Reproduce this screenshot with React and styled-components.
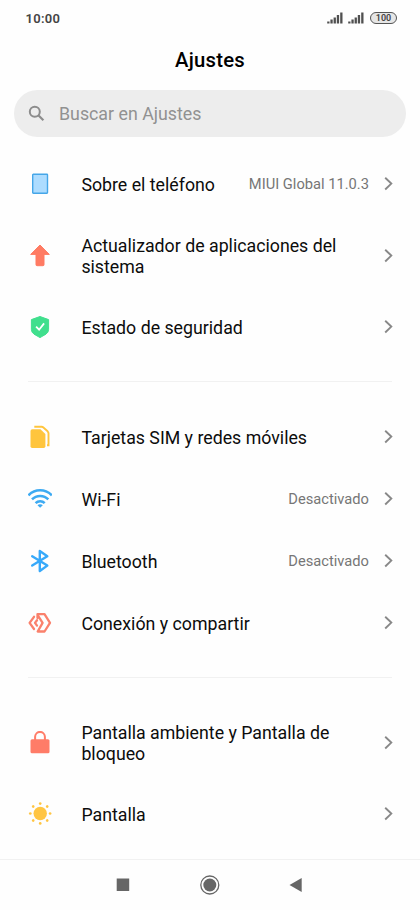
import React from "react";
import styled, { createGlobalStyle } from "styled-components";

const GlobalStyle = createGlobalStyle`
    * {
        box-sizing: border-box;
    }

    body {
        margin: 0;
        background: #fefefe;
        font-family: Roboto, "Liberation Sans", sans-serif;
    }
`;

const Screen = styled.div`
    display: flex;
    flex-direction: column;
    width: 420px;
    height: 910px;
    overflow: hidden;
    background: #fefefe;
`;

const StatusBar = styled.header`
    display: flex;
    align-items: center;
    justify-content: space-between;
    height: 36px;
    padding: 0 23px 0 25.5px;
`;

const Clock = styled.span`
    font-size: 13px;
    font-weight: 600;
    letter-spacing: 0.3px;
    color: #444;
`;

const StatusIcons = styled.div`
    display: flex;
    align-items: center;
    gap: 5px;
`;

const Battery = styled.span`
    width: 27px;
    height: 12px;
    margin-left: 1px;
    border: 1.5px solid #555;
    border-radius: 6px;
    background: #e6e6e6;
    font-size: 9px;
    font-weight: 600;
    line-height: 10px;
    text-align: center;
    color: #444;
`;

const Title = styled.h1`
    height: 54px;
    margin: 0;
    font-size: 20.3px;
    font-weight: 500;
    line-height: 48px;
    letter-spacing: 0.25px;
    text-align: center;
    color: #000;
`;

const SearchBox = styled.div`
    display: flex;
    flex-shrink: 0;
    align-items: center;
    gap: 14px;
    height: 47px;
    margin: 0 14px 16px;
    padding: 0 14px;
    border-radius: 24px;
    background: #ededed;
    font-size: 17.8px;
    color: #919191;
`;

const Divider = styled.hr`
    flex-shrink: 0;
    height: 1px;
    margin: 23px 28px 24px;
    border: 0;
    background: #f1f1f1;
`;

const Row = styled.div`
    display: flex;
    align-items: center;
    height: ${props => (props.$tall ? 81 : 62)}px;
    padding: 0 26px 0 28px;
`;

const Icon = styled.svg`
    display: block;
    flex-shrink: 0;
    width: ${props => props.$width || 24}px;
    height: ${props => props.$height || 24}px;
`;

const Label = styled.span`
    flex: 1;
    margin-left: 29.4px;
    padding-top: 2px;
    font-size: 17.75px;
    line-height: 21px;
    white-space: pre-line;
    color: #0c0c0c;
`;

const Value = styled.span`
    margin-right: 13px;
    font-size: 14.7px;
    color: #767676;
`;

const NavBar = styled.nav`
    display: flex;
    align-items: center;
    justify-content: center;
    gap: 62px;
    height: 51px;
    margin-top: auto;
    border-top: 1px solid #f1f1f1;
`;

const PhoneIcon = () => (
    <Icon viewBox="0 0 24 24">
        <rect
            x="4.7"
            y="2.2"
            width="14.8"
            height="19"
            rx="0.6"
            fill="#addcff"
            stroke="#45a6e8"
            strokeWidth="1.4"
        />
    </Icon>
);

const UpdateIcon = () => (
    <Icon viewBox="0 0 24 24">
        <path
            d="M12 1 21.3 10.4H16V20.7Q16 21.7 15 21.7H9Q8 21.7 8 20.7V10.4H2.7Z"
            fill="#ff7b63"
            stroke="#ff7b63"
            strokeWidth="1"
            strokeLinejoin="round"
        />
    </Icon>
);

const ShieldIcon = () => (
    <Icon viewBox="0 0 24 24">
        <path
            d="M12 1.5 20.6 4.6V14.5Q20.6 17.4 17.9 19.2L12 22.6 6.1 19.2Q3.4 17.4 3.4 14.5V4.6Z"
            fill="#40df8d"
            stroke="#40df8d"
            strokeLinejoin="round"
        />
        <path
            d="m8.1 11.7 3 3 5-6.3"
            fill="none"
            stroke="#fff"
            strokeWidth="1.8"
        />
    </Icon>
);

const SimIcon = () => (
    <Icon viewBox="0 0 24 24">
        <path
            d="M4.3 4.2H12.5L17.4 9.1V21.2Q17.4 22.9 15.7 22.9H4.2Q2.5 22.9 2.5 21.2V6Q2.5 4.2 4.3 4.2Z"
            fill="#ffc53d"
        />
        <path
            d="M6.3 1.8H13.6Q14.6 1.8 15.4 2.5L19.6 6.3Q20.5 7.2 20.5 8.3V20.3H19"
            fill="none"
            stroke="#ffc53d"
            strokeWidth="1.9"
        />
    </Icon>
);

const WifiIcon = () => (
    <Icon viewBox="0 0 24 24">
        <g fill="none" stroke="#3daaf2" strokeWidth="2.5">
            <path d="M0.5 8.4A16 16 0 0 1 23.8 8.4" />
            <path d="M4 12.4A11.2 11.2 0 0 1 20.3 12.4" />
            <path d="M7.6 16.2A6.3 6.3 0 0 1 16.7 16.2" />
        </g>
        <path
            d="M12.1 17.2Q13.8 17.2 14.8 18.2L12.1 20.8 9.5 18.2Q10.4 17.2 12.1 17.2Z"
            fill="#3daaf2"
        />
    </Icon>
);

const BluetoothIcon = () => (
    <Icon viewBox="0 0 24 24">
        <path
            d="M4.2 7.2 19.3 16.6 11.8 22V2L19.3 7.2 4.2 16.6"
            fill="none"
            stroke="#37a9fa"
            strokeWidth="2.4"
            strokeLinecap="round"
            strokeLinejoin="round"
        />
    </Icon>
);

const ShareIcon = () => (
    <Icon viewBox="0 0 24 24">
        <g
            fill="none"
            stroke="#fa816c"
            strokeWidth="2.3"
            strokeLinecap="round"
            strokeLinejoin="round"
        >
            <path d="M6 5.8 1.6 11.9 6 18" />
            <path d="M9 9.2 7 11.9 9 14.6" />
            <path d="M9.5 7V3.2H16.5L22 11.9 16.5 20.5H9.7L14.6 11.9 9.5 3.8" />
        </g>
    </Icon>
);

const LockIcon = () => (
    <Icon viewBox="0 0 24 24">
        <rect x="2.5" y="8.3" width="19" height="14" rx="1.5" fill="#ff7c68" />
        <path
            d="M7.1 9V5.8A4.9 4.9 0 0 1 16.9 5.8V9"
            fill="none"
            stroke="#ff7c68"
            strokeWidth="2"
        />
    </Icon>
);

const SunIcon = () => (
    <Icon viewBox="0 0 24 24">
        <g fill="#ffc543">
            <circle cx="12.2" cy="11.5" r="6.7" />
            {[0, 45, 90, 135, 180, 225, 270, 315].map(angle => (
                <circle
                    key={angle}
                    cx="12.2"
                    cy="1.6"
                    r="1.35"
                    transform={`rotate(${angle} 12.2 11.5)`}
                />
            ))}
        </g>
    </Icon>
);

const Chevron = () => (
    <Icon $width={12} $height={16} viewBox="0 0 12 16">
        <path
            d="M3.2 1.8 9.3 7.6 3.2 13.5"
            fill="none"
            stroke="#888"
            strokeWidth="1.9"
        />
    </Icon>
);

const Signal = () => (
    <Icon $width={16} $height={12} viewBox="0 0 16 12">
        <path
            d="M0.2 9.4h2.3V11.5H0.2zM3.4 7.6h2.3V11.5H3.4zM6.6 5.4h2.3V11.5H6.6zM9.8 3h2.3V11.5H9.8zM13.2 0.4h2.3V11.5H13.2z"
            fill="#505050"
        />
    </Icon>
);

// Settings, one array for each block between dividers
const groups = [
    [
        { icon: PhoneIcon, label: "Sobre el teléfono", value: "MIUI Global 11.0.3" },
        {
            icon: UpdateIcon,
            label: "Actualizador de aplicaciones del\nsistema",
            tall: true
        },
        { icon: ShieldIcon, label: "Estado de seguridad" }
    ],
    [
        { icon: SimIcon, label: "Tarjetas SIM y redes móviles" },
        { icon: WifiIcon, label: "Wi-Fi", value: "Desactivado" },
        { icon: BluetoothIcon, label: "Bluetooth", value: "Desactivado" },
        { icon: ShareIcon, label: "Conexión y compartir" }
    ],
    [
        {
            icon: LockIcon,
            label: "Pantalla ambiente y Pantalla de\nbloqueo",
            tall: true
        },
        { icon: SunIcon, label: "Pantalla" }
    ]
];

export default function App() {
    return (
        <>
            <GlobalStyle />
            <Screen>
                <StatusBar>
                    <Clock>10:00</Clock>
                    <StatusIcons>
                        <Signal />
                        <Signal />
                        <Battery>100</Battery>
                    </StatusIcons>
                </StatusBar>
                <Title>Ajustes</Title>
                <SearchBox>
                    <Icon $width={17} $height={17} viewBox="0 0 17 17">
                        <circle
                            cx="6.8"
                            cy="6.8"
                            r="5"
                            fill="none"
                            stroke="#8c8c8c"
                            strokeWidth="2"
                        />
                        <path d="m10.3 10.3 5.1 5" stroke="#8c8c8c" strokeWidth="2.2" />
                    </Icon>
                    Buscar en Ajustes
                </SearchBox>
                {groups.map((rows, index) => (
                    <React.Fragment key={rows[0].label}>
                        {index > 0 && <Divider />}
                        <div>
                            {rows.map(({ icon: RowIcon, label, value, tall }) => (
                                <Row key={label} $tall={tall}>
                                    <RowIcon />
                                    <Label>{label}</Label>
                                    {value && <Value>{value}</Value>}
                                    <Chevron />
                                </Row>
                            ))}
                        </div>
                    </React.Fragment>
                ))}
                <NavBar>
                    <Icon viewBox="0 0 24 24">
                        <rect x="4.7" y="5.5" width="12.5" height="12.5" fill="#666" />
                    </Icon>
                    <Icon viewBox="0 0 24 24">
                        <circle
                            cx="11.8"
                            cy="12"
                            r="9"
                            fill="none"
                            stroke="#666"
                            strokeWidth="1.3"
                        />
                        <circle cx="11.8" cy="12" r="6.5" fill="#666" />
                    </Icon>
                    <Icon viewBox="0 0 24 24">
                        <path d="M5.5 12 17.7 5V19Z" fill="#666" />
                    </Icon>
                </NavBar>
            </Screen>
        </>
    );
}
